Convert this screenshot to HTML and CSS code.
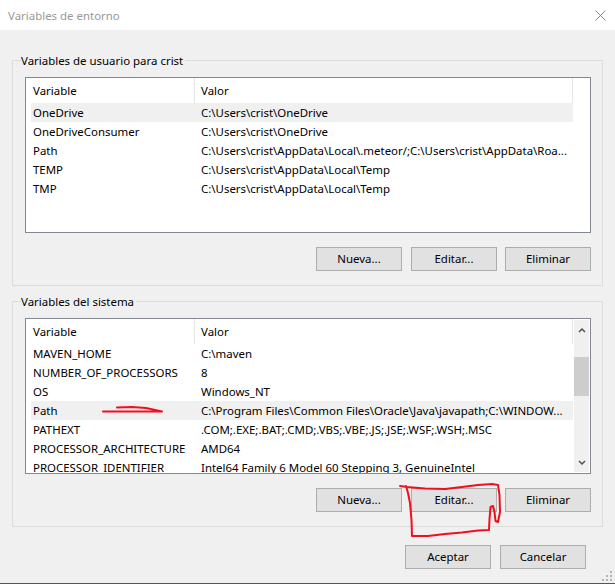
FILE: index.html
```html
<!DOCTYPE html>
<html lang="es">

<head>
    <meta charset="UTF-8">
    <meta name="viewport" content="width=device-width, initial-scale=1.0">
    <title>Variables de entorno</title>
    <link rel="stylesheet" href="styles.css">
</head>

<body>
    <div class="dialog">
        <header class="titlebar">
            <span class="title">Variables de entorno</span>
            <svg class="close" width="11" height="11" viewBox="0 0 11 11">
                <path d="M0.5 0.5L10.5 10.5M10.5 0.5L0.5 10.5" stroke="#8a8a8a" fill="none" />
            </svg>
        </header>

        <div class="content">
            <fieldset class="group">
                <legend>Variables de usuario para crist</legend>
                <div class="list">
                    <div class="list-body">
                        <div class="row head">
                            <span class="col-name">Variable</span>
                            <span class="col-value">Valor</span>
                        </div>
                        <div class="row selected">
                            <span class="col-name">OneDrive</span>
                            <span class="col-value">C:\Users\crist\OneDrive</span>
                        </div>
                        <div class="row">
                            <span class="col-name">OneDriveConsumer</span>
                            <span class="col-value">C:\Users\crist\OneDrive</span>
                        </div>
                        <div class="row">
                            <span class="col-name">Path</span>
                            <span class="col-value">C:\Users\crist\AppData\Local\.meteor/;C:\Users\crist\AppData\Roa...</span>
                        </div>
                        <div class="row">
                            <span class="col-name">TEMP</span>
                            <span class="col-value">C:\Users\crist\AppData\Local\Temp</span>
                        </div>
                        <div class="row">
                            <span class="col-name">TMP</span>
                            <span class="col-value">C:\Users\crist\AppData\Local\Temp</span>
                        </div>
                    </div>
                </div>
                <div class="actions">
                    <button type="button">Nueva...</button>
                    <button type="button">Editar...</button>
                    <button type="button">Eliminar</button>
                </div>
            </fieldset>

            <fieldset class="group">
                <legend>Variables del sistema</legend>
                <div class="list">
                    <div class="list-body">
                        <div class="row head">
                            <span class="col-name">Variable</span>
                            <span class="col-value">Valor</span>
                        </div>
                        <div class="row">
                            <span class="col-name">MAVEN_HOME</span>
                            <span class="col-value">C:\maven</span>
                        </div>
                        <div class="row">
                            <span class="col-name">NUMBER_OF_PROCESSORS</span>
                            <span class="col-value">8</span>
                        </div>
                        <div class="row">
                            <span class="col-name">OS</span>
                            <span class="col-value">Windows_NT</span>
                        </div>
                        <div class="row selected">
                            <span class="col-name">Path</span>
                            <span class="col-value">C:\Program Files\Common Files\Oracle\Java\javapath;C:\WINDOW...</span>
                        </div>
                        <div class="row">
                            <span class="col-name">PATHEXT</span>
                            <span class="col-value">.COM;.EXE;.BAT;.CMD;.VBS;.VBE;.JS;.JSE;.WSF;.WSH;.MSC</span>
                        </div>
                        <div class="row">
                            <span class="col-name">PROCESSOR_ARCHITECTURE</span>
                            <span class="col-value">AMD64</span>
                        </div>
                        <div class="row">
                            <span class="col-name">PROCESSOR_IDENTIFIER</span>
                            <span class="col-value">Intel64 Family 6 Model 60 Stepping 3, GenuineIntel</span>
                        </div>
                    </div>
                    <div class="scrollbar">
                        <svg width="8" height="6" viewBox="0 0 8 6">
                            <path d="M1 5L4 2L7 5" stroke="#505050" stroke-width="1.5" fill="none" />
                        </svg>
                        <div class="track">
                            <div class="thumb"></div>
                        </div>
                        <svg width="8" height="6" viewBox="0 0 8 6">
                            <path d="M1 1L4 4L7 1" stroke="#505050" stroke-width="1.5" fill="none" />
                        </svg>
                    </div>
                </div>
                <div class="actions">
                    <button type="button">Nueva...</button>
                    <button type="button">Editar...</button>
                    <button type="button">Eliminar</button>
                </div>
            </fieldset>

            <div class="footer">
                <button type="button">Aceptar</button>
                <button type="button">Cancelar</button>
            </div>
        </div>

        <!-- grip dots in the corner -->
        <svg class="grip" width="12" height="12" viewBox="0 0 12 12" fill="#b4b4b4">
            <rect x="8" y="0" width="2" height="2" />
            <rect x="4" y="4" width="2" height="2" />
            <rect x="8" y="4" width="2" height="2" />
            <rect x="0" y="8" width="2" height="2" />
            <rect x="4" y="8" width="2" height="2" />
            <rect x="8" y="8" width="2" height="2" />
        </svg>

        <!-- red marker drawn over the screenshot -->
        <svg class="ink" width="615" height="584" viewBox="0 0 615 584">
            <path d="M103 411.5L130 411.5L162 411.5L146 408L132 407L117 407.5" />
            <path d="M400 486L407 487L425 488.5L445 489L462 487L478 485L492 484L498 485L499.500 495L500 512L498 522L495.500 521L494.500 512L493 506L490.500 507L489.500 519L489 530L478 530.500L462 532.500L445 534L428 536L412 536L411.500 520L410 503L408 493L406 486" />
        </svg>
    </div>
</body>

</html>
```

FILE: styles.css
```css
body {
    margin: 0;
    padding: 0;
    font-family: "Noto Sans", Arial, sans-serif;
    font-size: 11.45px;
    color: #000;
    background: #f0f0f0;
}

.dialog {
    position: relative;
    width: 615px;
    height: 584px;
    overflow: hidden;
    background: #f0f0f0;
    border-bottom: 1px solid #555;
    box-sizing: border-box;
}

.titlebar {
    height: 30px;
    background: #fff;
    display: flex;
    justify-content: space-between;
    align-items: center;
    padding: 0 9px 0 8px;
}

.title {
    color: #999;
}

.content {
    padding: 22px 12px 0 12px;
}

.group {
    height: 234px;
    box-sizing: border-box;
    margin: 0 0 7px 0;
    padding: 0 11px 0 12px;
    border: 1px solid #dcdcdc;
    min-width: 0;
    display: flex;
    flex-direction: column;
}

.group legend {
    padding: 0 2px 0 0;
    margin-left: -4px;
    line-height: 17px;
}

.list {
    display: flex;
    height: 156px;
    margin-top: 8px;
    box-sizing: border-box;
    border: 1px solid #828790;
    background: #fff;
    overflow: hidden;
}

.list-body {
    flex: 1;
    min-width: 0;
    padding-left: 5px;
}

.row {
    display: flex;
    width: 542px;
    height: 19px;
    line-height: 19px;
    white-space: nowrap;
}

.row.head {
    height: 25px;
    line-height: 25px;
    border-right: 1px solid #e5e5e5;
    box-sizing: border-box;
}

.row.selected {
    background: #f0f0f0;
}

.col-name {
    width: 164px;
    padding-left: 2px;
    box-sizing: border-box;
}

.col-value {
    flex: 1;
    padding-left: 6px;
    overflow: hidden;
}

.row.head .col-name {
    border-right: 1px solid #e5e5e5;
}

.scrollbar {
    flex: none;
    width: 15px;
    background: #f0f0f0;
    display: flex;
    flex-direction: column;
    align-items: center;
    padding-top: 7px;
    padding-bottom: 6px;
    box-sizing: border-box;
    margin: 1px 1px 1px 0;
}

.track {
    flex: 1;
    width: 100%;
    padding-top: 24px;
}

.thumb {
    height: 39px;
    background: #cdcdcd;
}

.actions {
    display: flex;
    justify-content: flex-end;
    gap: 8px;
    margin-top: 14px;
}

.actions button:first-child {
    margin-right: 1px;
}

.footer {
    display: flex;
    justify-content: flex-end;
    gap: 9px;
    margin-top: 18px;
    padding-right: 17px;
}

button {
    width: 86px;
    height: 24px;
    padding: 0 0 1px 0;
    font-family: inherit;
    font-size: 11.45px;
    color: #000;
    background: #e1e1e1;
    border: 1px solid #adadad;
}

.grip {
    position: absolute;
    right: 1px;
    bottom: 0;
}

.ink {
    position: absolute;
    left: 0;
    top: 0;
    pointer-events: none;
}

.ink path {
    fill: none;
    stroke: #f00f1e;
    stroke-width: 2;
    stroke-linejoin: round;
    stroke-linecap: round;
}
```
